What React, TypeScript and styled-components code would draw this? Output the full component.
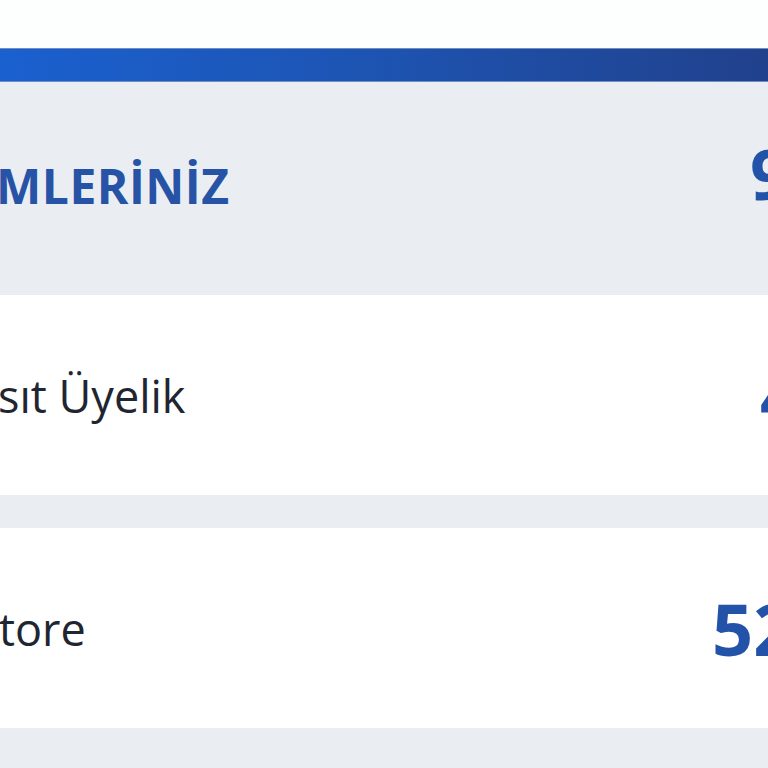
import React from "react";
import styled, { createGlobalStyle } from "styled-components";

const GlobalStyle = createGlobalStyle`
  html, body {
    margin: 0;
    padding: 0;
    background: #eaeef2;
    overflow: hidden;
  }
  #root {
    width: 768px;
    height: 768px;
  }
`;

const Page = styled.div`
  width: 768px;
  height: 768px;
  overflow: hidden;
  background: #eaeef2;
  font-family: "Open Sans", "Noto Sans", sans-serif;
  display: flex;
  flex-direction: column;
`;

const TopSpace = styled.div`
  height: 48px;
  background: #fdfefe;
  flex: none;
`;

const Bar = styled.div`
  height: 34px;
  flex: none;
  background: linear-gradient(90deg, #1a60cf 0%, #1d55b4 45%, #21418c 100%);
  box-shadow: inset 0 1px 0 #6f8fc4, inset 0 -1px 0 #6f8fc4;
`;

const Header = styled.div`
  height: 213px;
  flex: none;
  display: flex;
  align-items: center;
  justify-content: space-between;
  background: #eaeef2;
`;

const Title = styled.h2`
  margin: -6px 0 0 -4px;
  font-size: 48px;
  font-weight: 700;
  letter-spacing: 0.5px;
  color: #2753a6;
  white-space: nowrap;
`;

const List = styled.div`
  display: flex;
  flex-direction: column;
  gap: 33px;
`;

const Row = styled.div`
  height: 200px;
  background: #ffffff;
  display: flex;
  align-items: center;
  justify-content: space-between;
`;

const Label = styled.span<{ $shift: number }>`
  margin-left: ${(p) => p.$shift}px;
  font-size: 45px;
  font-weight: 400;
  color: #1f2631;
  white-space: nowrap;
`;

const Value = styled.span<{ $peek: number; $size: number; $lift?: number }>`
  flex: none;
  width: 140px;
  margin-right: ${(p) => p.$peek - 140}px;
  font-size: ${(p) => p.$size}px;
  font-weight: 700;
  color: #2353a8;
  white-space: nowrap;
  line-height: 1;
  margin-top: ${(p) => p.$lift ?? 0}px;
`;

const rows = [
  { label: "sıt Üyelik", shift: -2, value: "4", peek: 8 },
  { label: "tore", shift: -1, value: "52", peek: 56 },
];

export default function App() {
  return (
    <>
      <GlobalStyle />
      <Page>
        <TopSpace />
        <Bar />
        <Header>
          <Title>MLERİNİZ</Title>
          <Value $peek={18} $size={70} $lift={-32}>
            9
          </Value>
        </Header>
        <List>
          {rows.map((r) => (
            <Row key={r.label}>
              <Label $shift={r.shift}>{r.label}</Label>
              <Value $peek={r.peek} $size={72}>
                {r.value}
              </Value>
            </Row>
          ))}
        </List>
      </Page>
    </>
  );
}
